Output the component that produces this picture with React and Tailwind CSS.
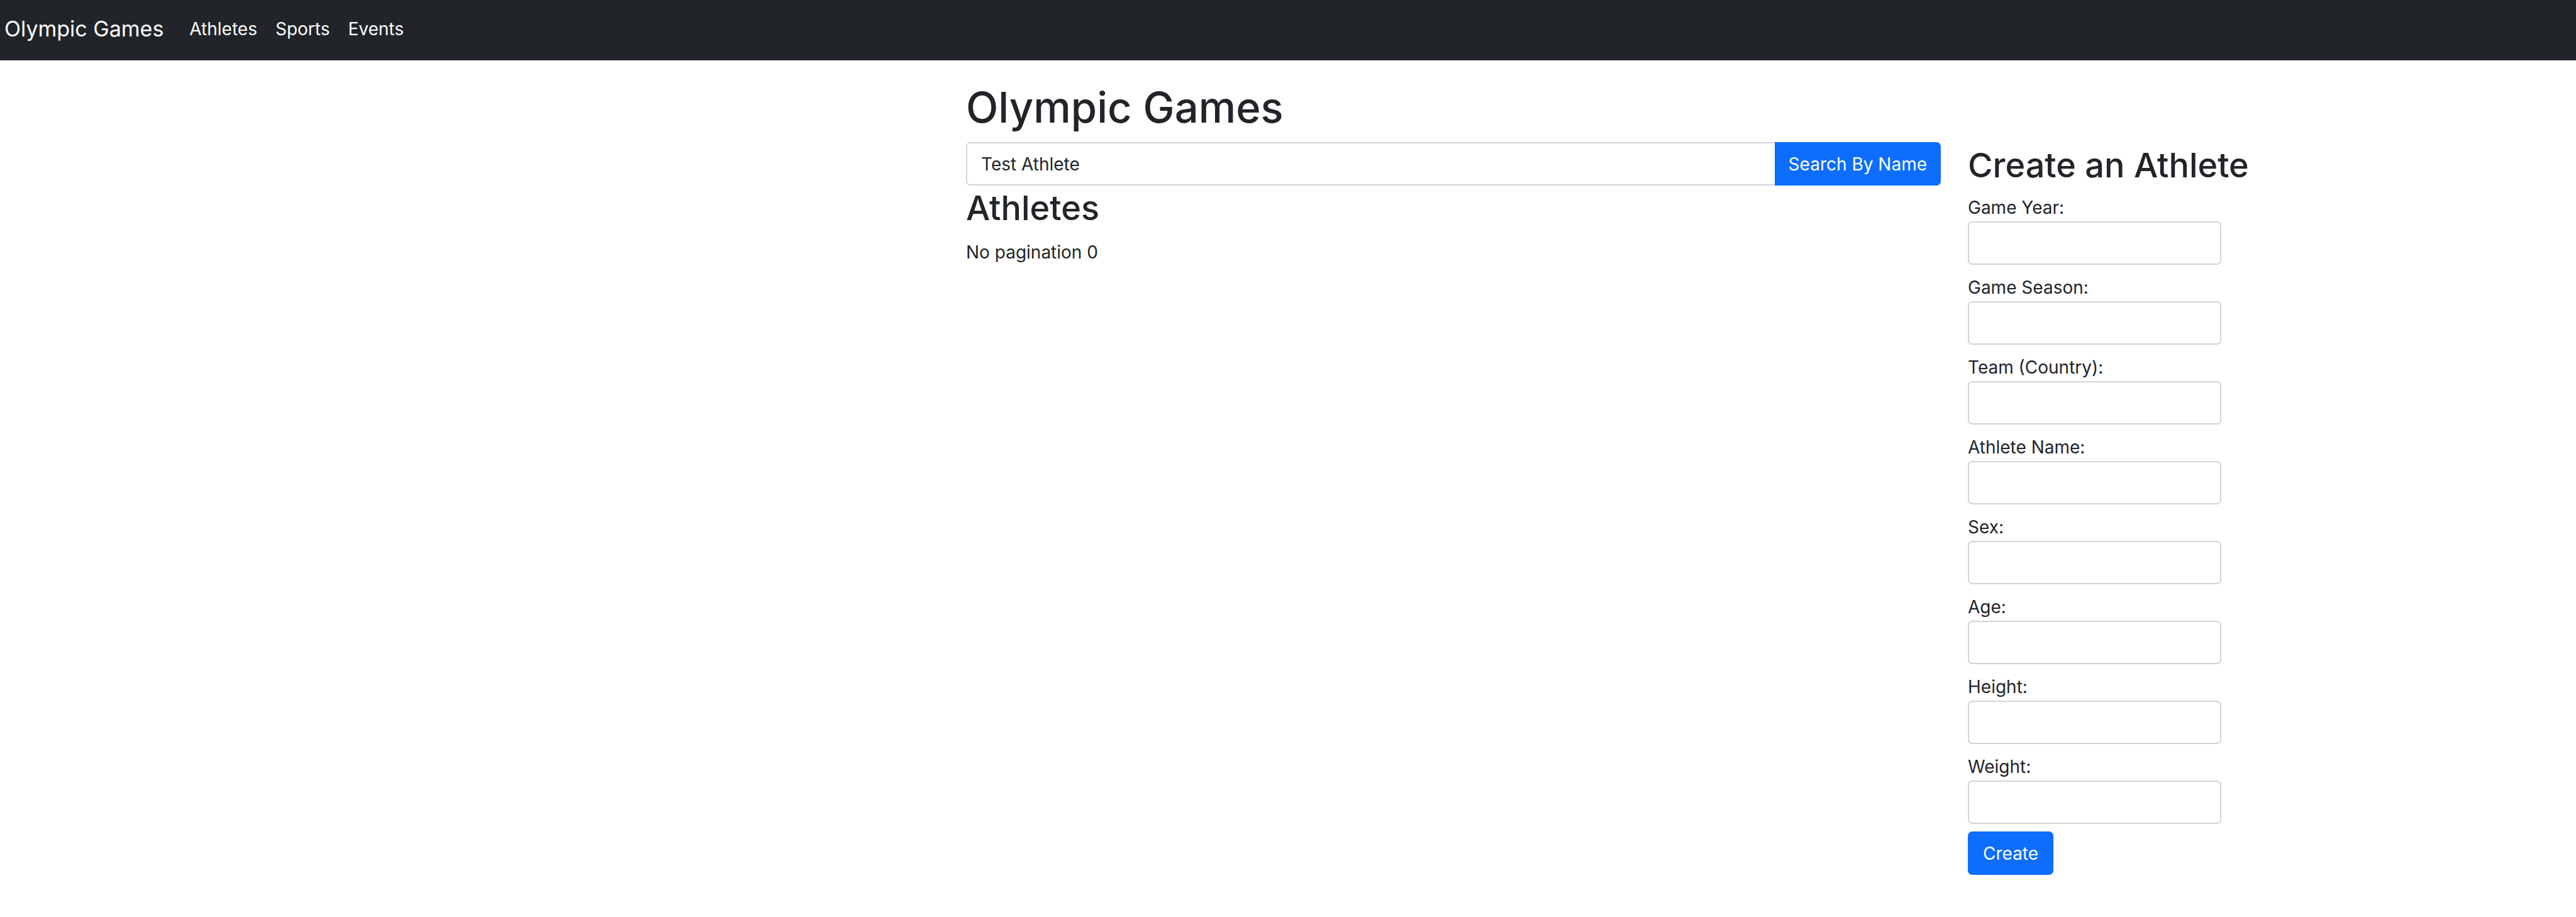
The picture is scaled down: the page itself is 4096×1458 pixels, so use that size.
const links = ["Athletes", "Sports", "Events"];

const fields = [
  { id: "year", label: "Game Year:" },
  { id: "season", label: "Game Season:" },
  { id: "team", label: "Team (Country):" },
  { id: "name", label: "Athlete Name:" },
  { id: "sex", label: "Sex:" },
  { id: "age", label: "Age:" },
  { id: "height", label: "Height:" },
  { id: "weight", label: "Weight:" },
];

function Navbar() {
  return (
    <nav className="flex h-24 items-center bg-[#212529] pb-1 pl-[7px] text-white">
      <a href="#" className="text-[34px] leading-[52px]">
        Olympic Games
      </a>
      <ul className="ml-[41px] flex gap-[29px]">
        {links.map((link) => (
          <li key={link}>
            <a href={`#${link.toLowerCase()}`}>{link}</a>
          </li>
        ))}
      </ul>
    </nav>
  );
}

function SearchForm() {
  return (
    <form className="mt-[15px] flex" onSubmit={(e) => e.preventDefault()}>
      <input
        type="text"
        aria-label="Athlete name"
        defaultValue="Test Athlete"
        className="h-[69px] min-w-0 flex-1 rounded-l-[7px] border-2 border-r-0 border-[#ced4da] bg-white px-[22px]"
      />
      <button
        type="submit"
        className="h-[69px] rounded-r-[7px] bg-[#0d6efd] px-[22px] whitespace-nowrap text-white"
      >
        Search By Name
      </button>
    </form>
  );
}

function CreateForm() {
  return (
    <form onSubmit={(e) => e.preventDefault()}>
      <div className="flex flex-col gap-[15px]">
        {fields.map(({ id, label }) => (
          <div key={id} className="flex flex-col items-start">
            <label htmlFor={id} className="leading-[43px]">
              {label}
            </label>
            <input
              id={id}
              type="text"
              className="h-[69px] w-[403px] rounded-[7px] border-2 border-[#ced4da] bg-white px-[22px]"
            />
          </div>
        ))}
      </div>
      <button
        type="submit"
        className="mt-3 h-[69px] rounded-[7px] bg-[#0d6efd] px-6 text-white"
      >
        Create
      </button>
    </form>
  );
}

export default function App() {
  return (
    <div className="min-h-screen bg-white font-['Inter',sans-serif] text-[28px] leading-[44px] text-[#212529]">
      <Navbar />
      <div className="grid grid-cols-[1536fr_1550fr_1010fr] pt-[35px]">
        <main className="col-start-2">
          <h1 className="text-[67px] leading-[80px] font-medium">Olympic Games</h1>
          <SearchForm />
          <h2 className="mt-0.5 text-[54px] leading-[68px] font-medium">Athletes</h2>
          <p className="mt-3.5">No pagination 0</p>
        </main>
        <aside className="pt-[98px] pl-[43px]">
          <h2 className="mb-3 text-[54px] leading-[68px] font-medium">Create an Athlete</h2>
          <CreateForm />
        </aside>
      </div>
    </div>
  );
}
